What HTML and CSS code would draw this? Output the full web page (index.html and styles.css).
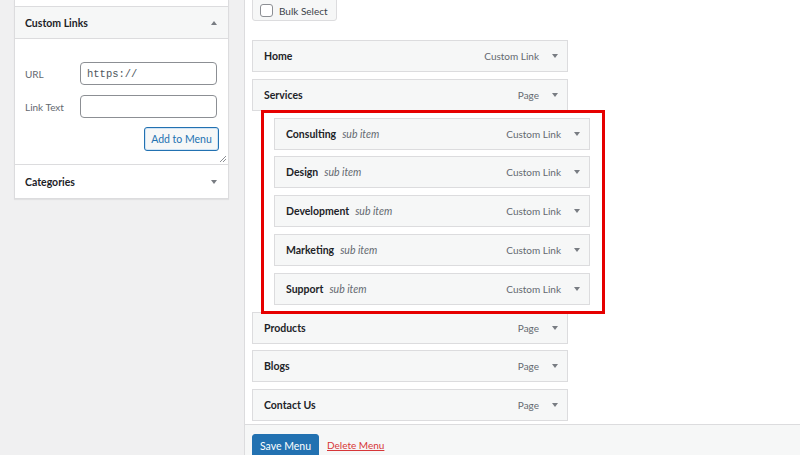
FILE: index.html
```html
<!DOCTYPE html>
<html>
<head>
<meta charset="utf-8">
<link rel="stylesheet" href="styles.css">
</head>
<body>
<div class="page">
  <aside class="sidebar">
    <div class="panel">
      <div class="prev"></div>
      <div class="acc-head open">
        <span class="acc-title">Custom Links</span>
        <span class="arrow-up"></span>
      </div>
      <div class="acc-body">
        <div class="field">
          <label class="lbl">URL</label>
          <div class="input mono">https://</div>
        </div>
        <div class="field">
          <label class="lbl">Link Text</label>
          <div class="input"></div>
        </div>
        <div class="actions">
          <button class="btn-secondary">Add to Menu</button>
        </div>
        <span class="resize"></span>
      </div>
      <div class="acc-head">
        <span class="acc-title">Categories</span>
        <span class="arrow-down"></span>
      </div>
    </div>
  </aside>
  <main class="main">
    <div class="content">
      <div class="bulk">
        <span class="check"></span>
        <span>Bulk Select</span>
      </div>
      <ul class="menu">
        <li class="item"><span class="title">Home</span><span class="type">Custom Link</span><span class="arrow-down"></span></li>
        <li class="item"><span class="title">Services</span><span class="type">Page</span><span class="arrow-down"></span></li>
        <li class="subgroup">
          <ul class="menu">
            <li class="item"><span class="title">Consulting</span><span class="sub">sub item</span><span class="type">Custom Link</span><span class="arrow-down"></span></li>
            <li class="item"><span class="title">Design</span><span class="sub">sub item</span><span class="type">Custom Link</span><span class="arrow-down"></span></li>
            <li class="item"><span class="title">Development</span><span class="sub">sub item</span><span class="type">Custom Link</span><span class="arrow-down"></span></li>
            <li class="item"><span class="title">Marketing</span><span class="sub">sub item</span><span class="type">Custom Link</span><span class="arrow-down"></span></li>
            <li class="item"><span class="title">Support</span><span class="sub">sub item</span><span class="type">Custom Link</span><span class="arrow-down"></span></li>
          </ul>
          <div class="highlight"></div>
        </li>
        <li class="item"><span class="title">Products</span><span class="type">Page</span><span class="arrow-down"></span></li>
        <li class="item"><span class="title">Blogs</span><span class="type">Page</span><span class="arrow-down"></span></li>
        <li class="item last"><span class="title">Contact Us</span><span class="type">Page</span><span class="arrow-down"></span></li>
      </ul>
    </div>
    <div class="footer">
      <button class="btn-primary">Save Menu</button>
      <a class="delete" href="#">Delete Menu</a>
    </div>
  </main>
</div>
</body>
</html>
```
FILE: styles.css
```css
* { box-sizing: border-box; }
html, body { margin: 0; padding: 0; }
body {
  background: #f0f0f1;
  font-family: "Lato", "Open Sans", sans-serif;
  font-size: 10px;
  color: #1d2327;
  height: 455px;
  overflow: hidden;
}
.page { display: flex; align-items: flex-start; height: 455px; }

.sidebar { width: 215px; margin-left: 14px; flex: none; }
.panel {
  background: #fff;
  border: 1px solid #dcdcde;
  border-top: none;
  box-shadow: 0 1px 1px rgba(0,0,0,.06);
}
.prev { height: 7px; border-bottom: 1px solid #dcdcde; }
.acc-head {
  display: flex; align-items: center; justify-content: space-between;
  height: 33px; padding: 0 11px 0 10px;
}
.acc-head.open { background: #f6f7f7; height: 32px; border-bottom: 1px solid #dcdcde; padding-top: 1px; }
.acc-title { font-weight: 700; font-size: 10.5px; color: #1d2327; }
.arrow-up { width: 0; height: 0; border-left: 3.5px solid transparent; border-right: 3.5px solid transparent; border-bottom: 4px solid #787c82; }
.arrow-down { width: 0; height: 0; border-left: 3.5px solid transparent; border-right: 3.5px solid transparent; border-top: 4px solid #787c82; flex: none; }

.acc-body { position: relative; padding: 23px 11px 13px 10px; border-bottom: 1px solid #dcdcde; }
.field { display: flex; align-items: center; margin-bottom: 10px; }
.lbl { width: 55px; color: #646970; font-size: 10px; }
.input {
  width: 137px; height: 23px; border: 1px solid #8c8f94; border-radius: 4px;
  background: #fff; padding: 0 6px; display: flex; align-items: center;
}
.mono { font-family: "Liberation Mono", "DejaVu Sans Mono", monospace; font-size: 10.5px; color: #50575e; }
.actions { display: flex; justify-content: flex-end; margin-right: -2px; margin-top: -1px; }
.btn-secondary {
  font-family: inherit; font-size: 10.5px; color: #2271b1;
  background: #f6f7f7; border: 1px solid #2271b1; border-radius: 3px;
  height: 24px; width: 75px; padding: 0; box-shadow: 0 0 0 1px #cfe3f5 inset;
}
.resize {
  position: absolute; right: 2px; bottom: 2px; width: 6px; height: 6px;
  background: linear-gradient(135deg, transparent 45%, #8c8f94 45%, #8c8f94 55%, transparent 55%, transparent 70%, #8c8f94 70%, #8c8f94 80%, transparent 80%);
}

.main {
  flex: 1; margin-left: 15px; background: #fff; border-left: 1px solid #dcdcde;
  height: 455px; display: flex; flex-direction: column;
}
.content { padding: 0 0 0 7px; }
.bulk {
  display: flex; align-items: center; gap: 6px; width: fit-content;
  margin-top: -10px; height: 31px; padding: 10px 8px 0 7px;
  background: #f6f7f7; border: 1px solid #dcdcde; border-radius: 3px;
  color: #3c434a; font-size: 10px;
}
.check { width: 13px; height: 13px; border: 1px solid #8c8f94; border-radius: 3px; background: #fff; }

.menu { list-style: none; margin: 0; padding: 0; }
.content > .menu { margin-top: 19px; }
.item {
  display: flex; align-items: center;
  width: 316px; height: 32px; margin-bottom: 6.8px;
  background: #f6f7f7; border: 1px solid #dcdcde;
  padding: 0 9px 0 11px;
}
.item.last { margin-bottom: 3px; }
.title { font-weight: 700; font-size: 10.5px; color: #1d2327; }
.sub { font-style: italic; color: #646970; margin-left: 6px; font-size: 10.5px; }
.type { margin-left: auto; margin-right: 13px; color: #646970; font-size: 10px; }
.subgroup { margin-left: 22px; position: relative; width: 316px; }
.highlight {
  position: absolute; left: -13px; top: -8px; right: -15px; bottom: -9px;
  border: 3px solid #e60000; pointer-events: none;
}

.footer {
  flex: 1; background: #f6f7f7; border-top: 1px solid #dcdcde;
  padding: 9px 0 0 7px; display: flex; align-items: flex-start; gap: 8px;
}
.btn-primary {
  font-family: inherit; font-size: 10.5px; color: #fff; background: #2271b1;
  border: 1px solid #2271b1; border-radius: 3px; height: 30px; width: 67px; padding: 0 0 6px;
}
.delete { color: #d63638; font-size: 10px; text-decoration: underline; margin-top: 5px; }
```
